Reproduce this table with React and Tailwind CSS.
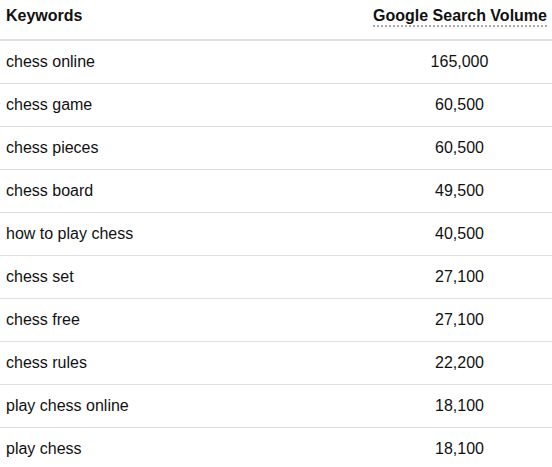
const rows = [
  ["chess online", "165,000"],
  ["chess game", "60,500"],
  ["chess pieces", "60,500"],
  ["chess board", "49,500"],
  ["how to play chess", "40,500"],
  ["chess set", "27,100"],
  ["chess free", "27,100"],
  ["chess rules", "22,200"],
  ["play chess online", "18,100"],
  ["play chess", "18,100"],
];

export default function App() {
  return (
    <div className="w-[552px] h-[467px] overflow-hidden bg-white font-['Liberation_Sans',Arial,sans-serif] text-[16px] text-[#111]">
      <table className="w-full table-fixed border-collapse">
        <thead>
          <tr className="border-b-2 border-[#dddddd]">
            <th className="h-[40px] w-[367px] px-[6px] pb-[7px] text-left font-bold align-middle whitespace-nowrap">Keywords</th>
            <th className="h-[40px] px-[6px] pb-[7px] text-center font-bold align-middle whitespace-nowrap">
              <span className="border-b-2 border-dotted border-[#aaaaaa] pb-[1px]">Google Search Volume</span>
            </th>
          </tr>
        </thead>
        <tbody>
          {rows.map(([kw, vol], i) => (
            <tr key={i} className="border-b border-[#dddddd]">
              <td className="h-[43px] px-[6px] text-left align-middle">{kw}</td>
              <td className="h-[43px] px-[6px] text-center align-middle">{vol}</td>
            </tr>
          ))}
        </tbody>
      </table>
    </div>
  );
}
